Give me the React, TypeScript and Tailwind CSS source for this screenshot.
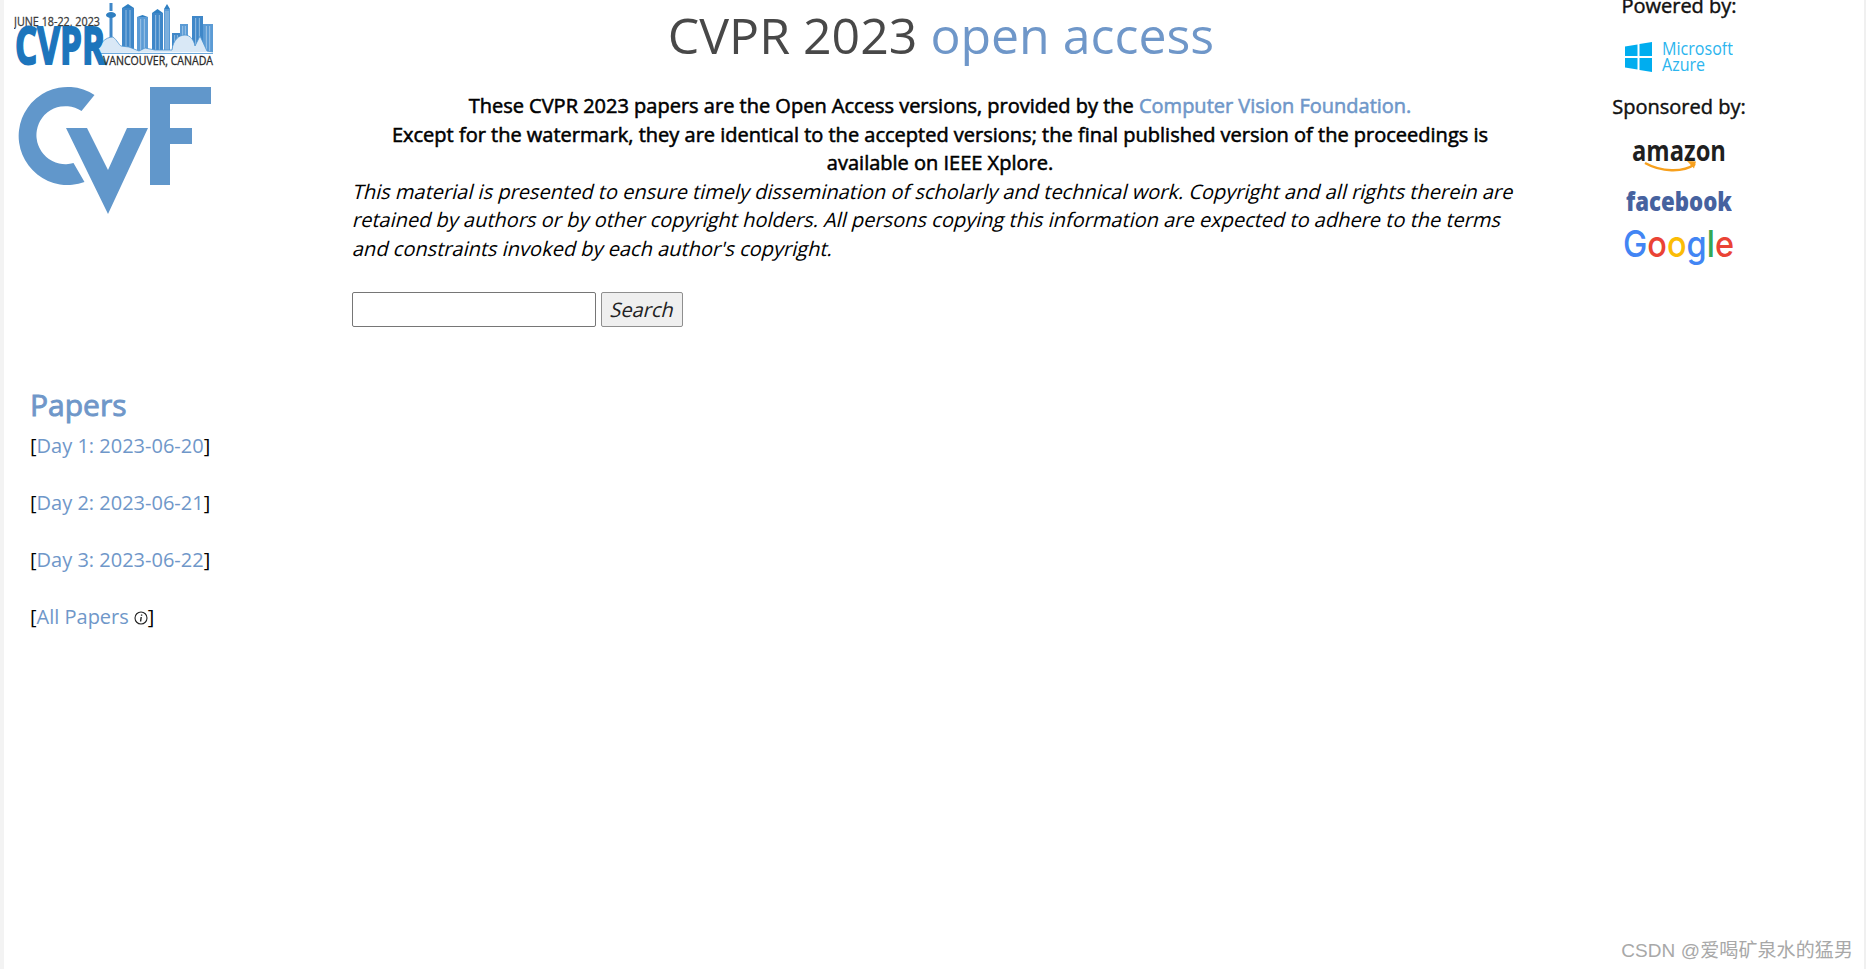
import React from "react";

const OS = "font-['Open_Sans',sans-serif]";

function CvprLogo() {
  const buildings = [
    [122, 8, 12, 44], [137, 17, 11, 35], [152, 13, 11, 39], [164, 9, 6, 43], [172, 33, 8, 19], [180, 24, 8, 28], [192, 16, 11, 36], [203, 24, 10, 28],
  ];
  return (
    <svg width="200" height="66" viewBox="14 3 200 66" className="block shrink-0">
      {buildings.map(([x, y, w, h], i) => (
        <g key={i}>
          <rect x={x} y={y} width={w} height={h} fill={i % 2 ? "#5b9bd5" : "#3f87c8"} />
          <path d={`M${x + w / 3} ${y + 2}V${y + h}M${x + (2 * w) / 3} ${y + 2}V${y + h}`} stroke="#cfe2f3" strokeWidth="0.6" />
        </g>
      ))}
      <path d="M111 3V11M111 15V40" stroke="#3f87c8" strokeWidth="3" />
      <ellipse cx="111" cy="15" rx="5" ry="3" fill="#2f7fc1" />
      <path d="M122 8l6-4 6 4zM137 17l5.500-2 5.500 2zM152 13l5.500-4 5.500 4zM164 9l3-5 3 5z" fill="#2f7fc1" />
      <path d="M97 53c2-9 8-16 16-16 4 3 6 8 8 9l8 1 10 4 6-3 10 2 17 0c1-10 7-15 13-15 5 0 9 5 10 11l5-10 7 15 6 1" fill="#d9e8f6" stroke="#4d94d1" strokeWidth="0.8" />
      <path d="M97 53.500H213" stroke="#6aa8dc" strokeWidth="1.200" />
      <text x="14" y="26" textLength="86" lengthAdjust="spacingAndGlyphs" fontFamily="Open Sans" fontSize="13.500" fill="#3c3c3c" stroke="#3c3c3c" strokeWidth="0.3">JUNE 18-22, 2023</text>
      <text x="15" y="64" textLength="90" lengthAdjust="spacingAndGlyphs" fontFamily="Open Sans" fontSize="52" fontWeight="700" fill="#1c75bc" stroke="#1c75bc" strokeWidth="2">CVPR</text>
      <text x="103" y="65" textLength="110" lengthAdjust="spacingAndGlyphs" fontFamily="Open Sans" fontSize="12.500" fill="#2a2a2a" stroke="#2a2a2a" strokeWidth="0.3">VANCOUVER, CANADA</text>
    </svg>
  );
}

function CvfLogo() {
  return (
    <svg width="196" height="130" viewBox="16 86 196 130" className="block shrink-0 mt-[17px] ml-[2px]" fill="#6197cb">
      <path d="M94.500 95A49 49 0 1 0 84.500 182L73.500 163A29 29 0 1 1 81.500 111Z" />
      <path d="M66 128H87L108 170L127 128H148L108 214Z" />
      <path d="M150 87H211V104H170V128H192V144H170V185H150Z" />
    </svg>
  );
}

function Day({ label }: { label: string }) {
  return (
    <div className="mb-[28.570px] text-[20px] leading-[28.570px] text-black">
      [<a className="text-[#6f97c9]">{label}</a>]
    </div>
  );
}

function Slanted({ children }: { children: React.ReactNode }) {
  return <div className="-skew-x-[14deg] origin-[0_70%] whitespace-nowrap">{children}</div>;
}

export default function App() {
  return (
    <div className={`${OS} h-[969px] overflow-hidden bg-white flex border-r-[2px] border-r-[#f0f0f0] border-l-[4px] border-l-[#f3f3f3] relative`}>
      <aside className="w-[348px] shrink-0 flex flex-col pl-[10px] pt-[3px]">
        <CvprLogo />
        <CvfLogo />
        <div className="pl-[16px] mt-[168px]">
          <h2 className="text-[30px] leading-[42px] font-normal [-webkit-text-stroke:0.9px] text-[#6f97c9] mb-[6px]">Papers</h2>
          <Day label="Day 1: 2023-06-20" />
          <Day label="Day 2: 2023-06-21" />
          <Day label="Day 3: 2023-06-22" />
          <div className="text-[20px] leading-[28.570px] text-black flex items-center">
            [<a className="text-[#6f97c9]">All Papers</a>
            <svg width="14" height="14" viewBox="0 0 14 14" fill="none" className="ml-[5px]">
              <circle cx="7" cy="7" r="6" stroke="#222" strokeWidth="1.100" />
              <path d="M7.600 3.500v1.200M7.200 6l-.6 4.500" stroke="#222" strokeWidth="1.400" />
            </svg>
            ]
          </div>
        </div>
      </aside>

      <main className="w-[1176px] shrink-0 text-[20px] leading-[28.570px] text-black">
        <h1 className="text-center text-[50px] leading-[60px] font-normal text-[#484848] pt-[5px] mb-[27px] pl-[2px]">
          CVPR 2023 <span className="text-[#6f97c9]">open access</span>
        </h1>
        <div className="text-center font-normal [-webkit-text-stroke:0.55px]">
          These CVPR 2023 papers are the Open Access versions, provided by the{" "}
          <a className="text-[#6f97c9]">Computer Vision Foundation.</a>
          <br />
          Except for the watermark, they are identical to the accepted versions; the final published version of the proceedings is available on IEEE Xplore.
        </div>
        <Slanted>This material is presented to ensure timely dissemination of scholarly and technical work. Copyright and all rights therein are</Slanted>
        <Slanted>retained by authors or by other copyright holders. All persons copying this information are expected to adhere to the terms</Slanted>
        <Slanted>and constraints invoked by each author's copyright.</Slanted>
        <div className="flex gap-[5px] mt-[29px]">
          <input className="w-[244px] h-[35px] border border-[#767676] rounded-[2px] bg-white" />
          <button className="w-[82px] h-[35px] border border-[#8f8f8f] rounded-[2px] bg-[#efefef] text-[20px] leading-[32px] text-[#222] pl-[2px]">
            <span className="inline-block -skew-x-[14deg]">Search</span>
          </button>
        </div>
      </main>

      <aside className="flex-1 flex flex-col items-center text-[20px] leading-[28px] text-[#111] pr-[34px] mt-[-8px] font-normal [-webkit-text-stroke:0.45px]">
        <div>Powered by:</div>
        <svg width="108" height="30" viewBox="0 0 108 30" className="mt-[22px] [-webkit-text-stroke:0]">
          <path d="M0 4.500l12.500-2V14H0zM14.500 2L27 0V14H14.500zM0 16h12.500v11.500l-12.500-2zM14.500 16H27v14l-12.500-2z" fill="#00adef" />
          <text x="37" y="13" fontFamily="Open Sans" fontSize="18" fontWeight="400" fill="#2cb5ee" textLength="71" lengthAdjust="spacingAndGlyphs">Microsoft</text>
          <text x="37" y="29" fontFamily="Open Sans" fontSize="18" fontWeight="400" fill="#2cb5ee" textLength="43" lengthAdjust="spacingAndGlyphs">Azure</text>
        </svg>
        <div className="mt-[21px]">Sponsored by:</div>
        <svg width="96" height="34" viewBox="0 0 96 34" className="mt-[20px] [-webkit-text-stroke:0]">
          <text x="1" y="20" fontFamily="Open Sans" fontSize="29" fontWeight="700" fill="#1f1f1f" textLength="94" lengthAdjust="spacingAndGlyphs">amazon</text>
          <path d="M14 22c16 9 38 10 50 1" fill="none" stroke="#f7a01d" strokeWidth="2.500" />
          <path d="M56 20l9 .5-2 7z" fill="#f7a01d" />
        </svg>
        <svg width="106" height="28" viewBox="0 0 106 28" className="mt-[12px] [-webkit-text-stroke:0]">
          <text x="0" y="24" fontFamily="Open Sans" fontSize="27" fontWeight="800" fill="#46629f" textLength="106" lengthAdjust="spacingAndGlyphs">facebook</text>
        </svg>
        <svg width="112" height="44" viewBox="0 0 112 44" className="mt-[9px] [-webkit-text-stroke:0]">
          <text x="0" y="33" fontFamily="Inter" fontSize="37" fontWeight="500" textLength="111" lengthAdjust="spacingAndGlyphs">
            <tspan fill="#4285f4">G</tspan>
            <tspan fill="#ea4335">o</tspan>
            <tspan fill="#fbbc05">o</tspan>
            <tspan fill="#4285f4">g</tspan>
            <tspan fill="#34a853">l</tspan>
            <tspan fill="#ea4335">e</tspan>
          </text>
        </svg>
      </aside>

      <div className="absolute right-[11px] bottom-[6px] text-[19px] leading-[24px] tracking-[0.1px] text-[#a8a8a8] font-['Liberation_Sans','Noto_Sans_CJK_SC',sans-serif]">
        CSDN @爱喝矿泉水的猛男
      </div>
    </div>
  );
}
